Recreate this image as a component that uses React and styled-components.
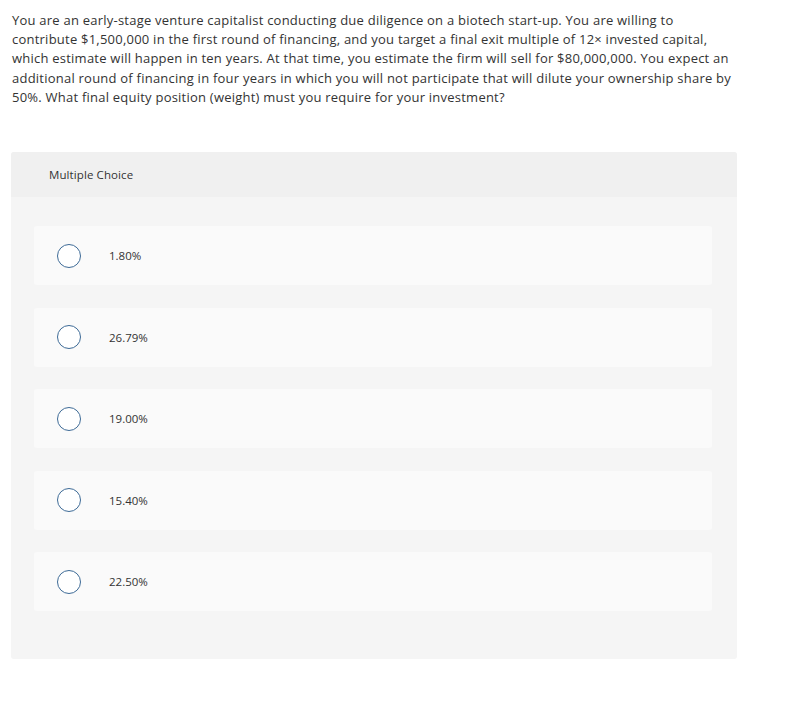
import React from "react";
import styled, { createGlobalStyle } from "styled-components";

const Global = createGlobalStyle`
  html, body { margin: 0; padding: 0; background: #fff; }
  body { font-family: "Open Sans", Lato, Arial, sans-serif; color: #333; }
`;

const Page = styled.div`
  width: 792px;
  padding: 11px 0 0 11px;
  box-sizing: border-box;
`;

const Question = styled.p`
  margin: 0;
  width: 760px;
  font-size: 13px;
  letter-spacing: 0.23px;
  line-height: 19.2px;
  color: #333;
  padding-left: 1px;
  white-space: nowrap;
`;

const Panel = styled.section`
  margin-top: 45px;
  width: 726px;
  background: #f5f5f5;
  border-radius: 3px;
  overflow: hidden;
`;

const Header = styled.div`
  height: 45px;
  background: #f0f0f0;
  display: flex;
  align-items: center;
  padding-left: 38px;
  font-size: 11.5px;
  letter-spacing: 0.1px;
  color: #333;
`;

const Options = styled.div`
  display: flex;
  flex-direction: column;
  gap: 22.5px;
  padding: 29px 25px 48px 23px;
`;

const Option = styled.label`
  height: 59px;
  background: #fafafa;
  border-radius: 3px;
  display: flex;
  align-items: center;
  padding-left: 23px;
  gap: 28px;
  font-size: 11.5px;
  color: #333;
`;

const Radio = styled.span`
  width: 22px;
  height: 22px;
  border: 1.5px solid #3d6a96;
  border-radius: 50%;
  box-sizing: content-box;
  background: #fff;
  flex: none;
`;

const lines = [
  "You are an early-stage venture capitalist conducting due diligence on a biotech start-up. You are willing to",
  "contribute $1,500,000 in the first round of financing, and you target a final exit multiple of 12× invested capital,",
  "which estimate will happen in ten years. At that time, you estimate the firm will sell for $80,000,000. You expect an",
  "additional round of financing in four years in which you will not participate that will dilute your ownership share by",
  "50%. What final equity position (weight) must you require for your investment?",
];

const choices = ["1.80%", "26.79%", "19.00%", "15.40%", "22.50%"];

export default function App() {
  return (
    <>
      <Global />
      <Page>
        <Question>
          {lines.map((l, i) => (
            <React.Fragment key={i}>
              {l}
              {i < lines.length - 1 && <br />}
            </React.Fragment>
          ))}
        </Question>
        <Panel>
          <Header>Multiple Choice</Header>
          <Options>
            {choices.map((c) => (
              <Option key={c}>
                <Radio />
                {c}
              </Option>
            ))}
          </Options>
        </Panel>
      </Page>
    </>
  );
}
